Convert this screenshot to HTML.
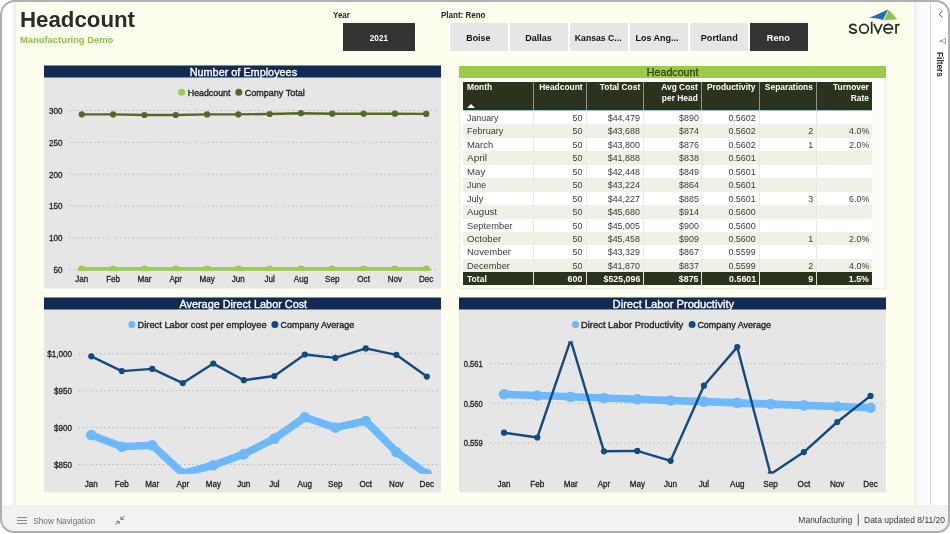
<!DOCTYPE html>
<html lang="en"><head><meta charset="utf-8"><title>Headcount - Manufacturing Demo</title>
<style>
html,body{margin:0;padding:0;}
body{width:950px;height:534px;overflow:hidden;background:#fff;font-family:"Liberation Sans", sans-serif;position:relative;}
.abs{position:absolute;}
#page{left:0;top:0;width:950px;height:534px;overflow:hidden;background:#fff;will-change:transform;}
#frame{left:0;top:0;width:950px;height:533.3px;box-sizing:border-box;border:2.1px solid #aeb0b6;border-radius:15px 14px 12px 14px;box-shadow:0 0 0 20px #fff;pointer-events:none;}
#canvas{left:16px;top:2px;width:898px;height:503px;background:#fdfeee;}
#lshadow{left:2px;top:2px;width:14px;height:503px;background:linear-gradient(90deg,#fff 0%,#fff 62%,#e9e9ea 100%);}
#fgap{background:linear-gradient(90deg,#e9e9e6 0%,#f6f6f4 18%,#fcfcfb 55%,#fdfdfd 100%);}
#fpane{background:#fff;border-left:1px solid #d8d8d8;box-sizing:border-box;}
#footer{background:#f2f2f0;}
#title{left:19.8px;top:5.9px;transform:scaleX(1.012);transform-origin:left;font-size:22px;font-weight:700;color:#2b2b2b;line-height:28px;white-space:nowrap;}
#sub{left:20px;top:34.1px;font-size:9.4px;font-weight:700;color:#8cc047;line-height:12px;white-space:nowrap;}
.lbl{font-size:8.4px;font-weight:700;color:#252423;line-height:10px;white-space:nowrap;}
.lbl span{display:inline-block;transform:scaleX(0.955);transform-origin:left;}
.btn{background:#e6e6e6;color:#111;font-size:9.8px;font-weight:700;text-align:center;line-height:30px;white-space:nowrap;}
.btn span{display:inline-block;transform:scaleX(0.88);}
.btn.sel{background:#333;color:#fff;}
#tpanel{background:#fcfdf6;box-sizing:border-box;border:1px solid #eceee2;}
#ttitle{position:absolute;left:-1px;top:-1px;width:427px;height:12.3px;background:#9acb4b;text-align:center;font-size:11px;line-height:13.4px;color:#34420f;-webkit-text-stroke:0.3px #34420f;}
#ttitle span{display:inline-block;transform:scaleX(0.968);}
#tbl{border-collapse:collapse;table-layout:fixed;width:409.1px;font-size:9.4px;color:#3a3a3a;}
#tbl th{background:#2b331c;color:#fff;height:28.8px;padding:0;vertical-align:top;font-size:9.6px;font-weight:700;line-height:10.6px;border-right:1px solid #8b989a;border-bottom:1px solid #9cc3dc;box-sizing:border-box;position:relative;}
#tbl th:last-child{border-right:none;}
#tbl th span{position:absolute;top:0.8px;display:block;white-space:nowrap;transform:scaleX(0.875);}
#tbl th.l span{left:3.6px;text-align:left;transform-origin:left top;}
#tbl th.r span{right:3.4px;text-align:right;transform-origin:right top;}
.sort{position:absolute;left:3.4px;top:22.2px;width:0;height:0;border-left:4.1px solid transparent;border-right:4.1px solid transparent;border-bottom:4.2px solid #fff;}
#tbl td{height:13.47px;padding:0;line-height:13.47px;border-right:1px solid #e9ebe2;box-sizing:border-box;white-space:nowrap;overflow:visible;}
#tbl td:last-child{border-right:none;}
#tbl td span{display:inline-block;transform:scaleX(0.95);}
#tbl td.l span{transform:scaleX(0.93);}
#tbl td.l{text-align:left;padding-left:3.6px;} #tbl td.l span{transform-origin:left center;}
#tbl td.r{text-align:right;padding-right:3.1px;} #tbl td.r span{transform-origin:right center;}
#tbl tbody tr{background:#fff;}
#tbl tbody tr.alt{background:#eef1e5;}
#tbl tbody tr.tot{background:#2b331c;color:#fff;font-weight:700;}
#tbl tbody tr.tot td{height:12.3px;line-height:12.3px;border-right:1px solid #dfe3d8;font-size:9.2px;}
#tbl tbody tr.tot td span{transform:scaleX(0.96);position:relative;top:0.7px;}
#tbl tbody tr.tot td.l span{transform:scaleX(0.93);}
#tbl tbody tr.tot td:last-child{border-right:none;}
</style></head>
<body>
<div class="abs" id="page">
<div class="abs" id="lshadow"></div>
<div class="abs" id="canvas"></div>
<div class="abs" id="title">Headcount</div>
<div class="abs" id="sub">Manufacturing Demo</div>
<div class="abs lbl" style="left:333.4px;top:9.5px"><span>Year</span></div><div class="abs btn sel" style="left:342.6px;top:23.2px;width:72.8px;height:28.3px"><span style="transform:scaleX(0.835)">2021</span></div><div class="abs lbl" style="left:440.6px;top:9.5px"><span>Plant: Reno</span></div><div class="abs btn" style="left:449.6px;top:23.2px;width:58.2px;height:28.3px"><span style="transform:translateX(0px) scaleX(0.9)">Boise</span></div><div class="abs btn" style="left:509.6px;top:23.2px;width:58.2px;height:28.3px"><span style="transform:translateX(0px) scaleX(0.922)">Dallas</span></div><div class="abs btn" style="left:569.6px;top:23.2px;width:58.2px;height:28.3px"><span style="transform:translateX(-0.2px) scaleX(0.885)">Kansas C...</span></div><div class="abs btn" style="left:629.6px;top:23.2px;width:58.2px;height:28.3px"><span style="transform:translateX(-1.5px) scaleX(0.915)">Los Ang...</span></div><div class="abs btn" style="left:689.6px;top:23.2px;width:58.2px;height:28.3px"><span style="transform:translateX(0.4px) scaleX(0.93)">Portland</span></div><div class="abs btn sel" style="left:749.6px;top:23.2px;width:58.2px;height:28.3px"><span style="transform:translateX(0px) scaleX(0.94)">Reno</span></div>
<svg class="abs" style="left:840px;top:4px" width="70" height="38" viewBox="840 4 70 38">
<path d="M869.1 18.1 L888.2 9.6 L883.0 19.9 Q876.5 17.6 869.1 18.1 Z" fill="#1f6db5"/>
<path d="M888.9 9.7 L897.2 19.6 L884.0 19.9 Z" fill="#8cc540"/>
<g fill="none" stroke="#2b2b29" stroke-width="1.7">
<path d="M856.1 26.3 C855.6 25.0 854.4 24.45 853.0 24.45 C851.1 24.45 849.9 25.5 849.9 26.8 C849.9 28.2 851.0 28.6 852.9 29.1 C855.2 29.7 856.4 30.1 856.4 31.0 C856.4 32.3 855.0 33.05 853.0 33.05 C851.2 33.05 849.9 32.3 849.4 30.9"/>
<circle cx="864" cy="28.75" r="4.35"/>
<path d="M871.7 21.7 L871.7 33.8"/>
<path d="M874.0 23.9 L878.0 32.9 L882.0 23.9" stroke-linejoin="miter"/>
<path d="M884.0 28.9 L892.6 28.9 A4.35 4.35 0 1 0 891.5 31.7"/>
<path d="M896.05 23.9 L896.05 33.8 M896.05 27.4 C896.05 25.3 897.5 24.3 899.7 24.6"/>
</g>
</svg>
<svg class="abs" style="left:44px;top:65px" width="397" height="224" viewBox="44 65 397 224" font-family='"Liberation Sans", sans-serif'><rect x="44" y="65.5" width="397" height="223" fill="#e6e6e6"/><rect x="44" y="65.5" width="397" height="12" fill="#132b52"/><text x="189.70" y="75.80" font-size="11" fill="#fff" font-weight="400" stroke="#fff" stroke-width="0.35" textLength="107.4" lengthAdjust="spacingAndGlyphs">Number of Employees</text><defs><clipPath id="cp1"><rect x="44" y="78" width="397" height="192.8"/></clipPath></defs><line x1="69.5" x2="437.5" y1="110.50" y2="110.50" stroke="#a8a8a8" stroke-width="1" stroke-dasharray="1 3.2"/><text transform="translate(62.50,113.70) scale(0.93,1)" font-size="8.7" stroke="#222221" stroke-width="0.3" text-anchor="end" fill="#222221" font-weight="400" >300</text><line x1="69.5" x2="437.5" y1="142.40" y2="142.40" stroke="#a8a8a8" stroke-width="1" stroke-dasharray="1 3.2"/><text transform="translate(62.50,145.60) scale(0.93,1)" font-size="8.7" stroke="#222221" stroke-width="0.3" text-anchor="end" fill="#222221" font-weight="400" >250</text><line x1="69.5" x2="437.5" y1="174.30" y2="174.30" stroke="#a8a8a8" stroke-width="1" stroke-dasharray="1 3.2"/><text transform="translate(62.50,177.50) scale(0.93,1)" font-size="8.7" stroke="#222221" stroke-width="0.3" text-anchor="end" fill="#222221" font-weight="400" >200</text><line x1="69.5" x2="437.5" y1="206.20" y2="206.20" stroke="#a8a8a8" stroke-width="1" stroke-dasharray="1 3.2"/><text transform="translate(62.50,209.40) scale(0.93,1)" font-size="8.7" stroke="#222221" stroke-width="0.3" text-anchor="end" fill="#222221" font-weight="400" >150</text><line x1="69.5" x2="437.5" y1="238.00" y2="238.00" stroke="#a8a8a8" stroke-width="1" stroke-dasharray="1 3.2"/><text transform="translate(62.50,241.20) scale(0.93,1)" font-size="8.7" stroke="#222221" stroke-width="0.3" text-anchor="end" fill="#222221" font-weight="400" >100</text><line x1="69.5" x2="437.5" y1="269.80" y2="269.80" stroke="#a8a8a8" stroke-width="1" stroke-dasharray="1 3.2"/><text transform="translate(62.50,273.00) scale(0.93,1)" font-size="8.7" stroke="#222221" stroke-width="0.3" text-anchor="end" fill="#222221" font-weight="400" >50</text><g clip-path="url(#cp1)"><polyline points="81.80,269.80 113.11,269.80 144.42,269.80 175.73,269.80 207.04,269.80 238.35,269.80 269.66,269.80 300.97,269.80 332.28,269.80 363.59,269.80 394.90,269.80 426.21,269.80" fill="none" stroke="#9ccc50" stroke-width="5.4" stroke-linejoin="round" stroke-linecap="round"/><circle cx="81.80" cy="269.80" r="4.3" fill="#9ccc50"/><circle cx="113.11" cy="269.80" r="4.3" fill="#9ccc50"/><circle cx="144.42" cy="269.80" r="4.3" fill="#9ccc50"/><circle cx="175.73" cy="269.80" r="4.3" fill="#9ccc50"/><circle cx="207.04" cy="269.80" r="4.3" fill="#9ccc50"/><circle cx="238.35" cy="269.80" r="4.3" fill="#9ccc50"/><circle cx="269.66" cy="269.80" r="4.3" fill="#9ccc50"/><circle cx="300.97" cy="269.80" r="4.3" fill="#9ccc50"/><circle cx="332.28" cy="269.80" r="4.3" fill="#9ccc50"/><circle cx="363.59" cy="269.80" r="4.3" fill="#9ccc50"/><circle cx="394.90" cy="269.80" r="4.3" fill="#9ccc50"/><circle cx="426.21" cy="269.80" r="4.3" fill="#9ccc50"/></g><g><polyline points="81.80,114.40 113.11,114.40 144.42,115.00 175.73,115.00 207.04,114.40 238.35,114.40 269.66,114.00 300.97,113.20 332.28,113.70 363.59,113.70 394.90,113.70 426.21,113.90" fill="none" stroke="#526a26" stroke-width="2.4" stroke-linejoin="round" stroke-linecap="round"/><circle cx="81.80" cy="114.40" r="3.1" fill="#526a26"/><circle cx="113.11" cy="114.40" r="3.1" fill="#526a26"/><circle cx="144.42" cy="115.00" r="3.1" fill="#526a26"/><circle cx="175.73" cy="115.00" r="3.1" fill="#526a26"/><circle cx="207.04" cy="114.40" r="3.1" fill="#526a26"/><circle cx="238.35" cy="114.40" r="3.1" fill="#526a26"/><circle cx="269.66" cy="114.00" r="3.1" fill="#526a26"/><circle cx="300.97" cy="113.20" r="3.1" fill="#526a26"/><circle cx="332.28" cy="113.70" r="3.1" fill="#526a26"/><circle cx="363.59" cy="113.70" r="3.1" fill="#526a26"/><circle cx="394.90" cy="113.70" r="3.1" fill="#526a26"/><circle cx="426.21" cy="113.90" r="3.1" fill="#526a26"/></g><text transform="translate(81.80,282.30) scale(0.93,1)" font-size="8.7" stroke="#222221" stroke-width="0.3" text-anchor="middle" fill="#222221" font-weight="400" >Jan</text><text transform="translate(113.11,282.30) scale(0.93,1)" font-size="8.7" stroke="#222221" stroke-width="0.3" text-anchor="middle" fill="#222221" font-weight="400" >Feb</text><text transform="translate(144.42,282.30) scale(0.93,1)" font-size="8.7" stroke="#222221" stroke-width="0.3" text-anchor="middle" fill="#222221" font-weight="400" >Mar</text><text transform="translate(175.73,282.30) scale(0.93,1)" font-size="8.7" stroke="#222221" stroke-width="0.3" text-anchor="middle" fill="#222221" font-weight="400" >Apr</text><text transform="translate(207.04,282.30) scale(0.93,1)" font-size="8.7" stroke="#222221" stroke-width="0.3" text-anchor="middle" fill="#222221" font-weight="400" >May</text><text transform="translate(238.35,282.30) scale(0.93,1)" font-size="8.7" stroke="#222221" stroke-width="0.3" text-anchor="middle" fill="#222221" font-weight="400" >Jun</text><text transform="translate(269.66,282.30) scale(0.93,1)" font-size="8.7" stroke="#222221" stroke-width="0.3" text-anchor="middle" fill="#222221" font-weight="400" >Jul</text><text transform="translate(300.97,282.30) scale(0.93,1)" font-size="8.7" stroke="#222221" stroke-width="0.3" text-anchor="middle" fill="#222221" font-weight="400" >Aug</text><text transform="translate(332.28,282.30) scale(0.93,1)" font-size="8.7" stroke="#222221" stroke-width="0.3" text-anchor="middle" fill="#222221" font-weight="400" >Sep</text><text transform="translate(363.59,282.30) scale(0.93,1)" font-size="8.7" stroke="#222221" stroke-width="0.3" text-anchor="middle" fill="#222221" font-weight="400" >Oct</text><text transform="translate(394.90,282.30) scale(0.93,1)" font-size="8.7" stroke="#222221" stroke-width="0.3" text-anchor="middle" fill="#222221" font-weight="400" >Nov</text><text transform="translate(426.21,282.30) scale(0.93,1)" font-size="8.7" stroke="#222221" stroke-width="0.3" text-anchor="middle" fill="#222221" font-weight="400" >Dec</text><circle cx="181.6" cy="92.3" r="3.5" fill="#9ccc50"/><text x="187.80" y="95.60" font-size="9.5" fill="#222221" font-weight="400" stroke="#222221" stroke-width="0.35" textLength="42.6" lengthAdjust="spacingAndGlyphs">Headcount</text><circle cx="238.8" cy="92.3" r="3.5" fill="#526a26"/><text x="244.70" y="95.60" font-size="9.5" fill="#222221" font-weight="400" stroke="#222221" stroke-width="0.35" textLength="60.1" lengthAdjust="spacingAndGlyphs">Company Total</text></svg>
<div class="abs" id="tpanel" style="left:459px;top:65.5px;width:427px;height:223px"><div id="ttitle"><span>Headcount</span></div></div><table class="abs" id="tbl" style="left:463.3px;top:81.5px"><colgroup><col style="width:70.2px"><col style="width:52.8px"><col style="width:57.4px"><col style="width:58.3px"><col style="width:57.6px"><col style="width:56.9px"><col style="width:55.9px"></colgroup><thead><tr><th class="l"><span>Month</span><i class="sort"></i></th><th class="r"><span>Headcount</span></th><th class="r"><span>Total Cost</span></th><th class="r"><span>Avg Cost<br>per Head</span></th><th class="r"><span>Productivity</span></th><th class="r"><span>Separations</span></th><th class="r"><span>Turnover<br>Rate</span></th></tr></thead><tbody><tr class=""><td class="l"><span style="transform:scaleX(0.944)">January</span></td><td class="r"><span>50</span></td><td class="r"><span>$44,479</span></td><td class="r"><span>$890</span></td><td class="r"><span>0.5602</span></td><td class="r"><span></span></td><td class="r"><span></span></td></tr><tr class="alt"><td class="l"><span style="transform:scaleX(0.967)">February</span></td><td class="r"><span>50</span></td><td class="r"><span>$43,688</span></td><td class="r"><span>$874</span></td><td class="r"><span>0.5602</span></td><td class="r"><span>2</span></td><td class="r"><span>4.0%</span></td></tr><tr class=""><td class="l"><span style="transform:scaleX(1.006)">March</span></td><td class="r"><span>50</span></td><td class="r"><span>$43,800</span></td><td class="r"><span>$876</span></td><td class="r"><span>0.5602</span></td><td class="r"><span>1</span></td><td class="r"><span>2.0%</span></td></tr><tr class="alt"><td class="l"><span style="transform:scaleX(1.07)">April</span></td><td class="r"><span>50</span></td><td class="r"><span>$41,888</span></td><td class="r"><span>$838</span></td><td class="r"><span>0.5601</span></td><td class="r"><span></span></td><td class="r"><span></span></td></tr><tr class=""><td class="l"><span style="transform:scaleX(1.027)">May</span></td><td class="r"><span>50</span></td><td class="r"><span>$42,448</span></td><td class="r"><span>$849</span></td><td class="r"><span>0.5601</span></td><td class="r"><span></span></td><td class="r"><span></span></td></tr><tr class="alt"><td class="l"><span style="transform:scaleX(0.939)">June</span></td><td class="r"><span>50</span></td><td class="r"><span>$43,224</span></td><td class="r"><span>$864</span></td><td class="r"><span>0.5601</span></td><td class="r"><span></span></td><td class="r"><span></span></td></tr><tr class=""><td class="l"><span style="transform:scaleX(0.972)">July</span></td><td class="r"><span>50</span></td><td class="r"><span>$44,227</span></td><td class="r"><span>$885</span></td><td class="r"><span>0.5601</span></td><td class="r"><span>3</span></td><td class="r"><span>6.0%</span></td></tr><tr class="alt"><td class="l"><span style="transform:scaleX(1.028)">August</span></td><td class="r"><span>50</span></td><td class="r"><span>$45,680</span></td><td class="r"><span>$914</span></td><td class="r"><span>0.5600</span></td><td class="r"><span></span></td><td class="r"><span></span></td></tr><tr class=""><td class="l"><span style="transform:scaleX(0.99)">September</span></td><td class="r"><span>50</span></td><td class="r"><span>$45,005</span></td><td class="r"><span>$900</span></td><td class="r"><span>0.5600</span></td><td class="r"><span></span></td><td class="r"><span></span></td></tr><tr class="alt"><td class="l"><span style="transform:scaleX(1.025)">October</span></td><td class="r"><span>50</span></td><td class="r"><span>$45,458</span></td><td class="r"><span>$909</span></td><td class="r"><span>0.5600</span></td><td class="r"><span>1</span></td><td class="r"><span>2.0%</span></td></tr><tr class=""><td class="l"><span style="transform:scaleX(1.015)">November</span></td><td class="r"><span>50</span></td><td class="r"><span>$43,329</span></td><td class="r"><span>$867</span></td><td class="r"><span>0.5599</span></td><td class="r"><span></span></td><td class="r"><span></span></td></tr><tr class="alt"><td class="l"><span style="transform:scaleX(0.992)">December</span></td><td class="r"><span>50</span></td><td class="r"><span>$41,870</span></td><td class="r"><span>$837</span></td><td class="r"><span>0.5599</span></td><td class="r"><span>2</span></td><td class="r"><span>4.0%</span></td></tr><tr class="tot"><td class="l"><span>Total</span></td><td class="r"><span>600</span></td><td class="r"><span>$525,096</span></td><td class="r"><span>$875</span></td><td class="r"><span>0.5601</span></td><td class="r"><span>9</span></td><td class="r"><span>1.5%</span></td></tr></tbody></table>
<svg class="abs" style="left:44px;top:297px" width="397" height="196" viewBox="44 297 397 196" font-family='"Liberation Sans", sans-serif'><rect x="44" y="297.5" width="397" height="195" fill="#e6e6e6"/><rect x="44" y="297.5" width="397" height="12" fill="#132b52"/><text x="179.50" y="307.80" font-size="11" fill="#fff" font-weight="400" stroke="#fff" stroke-width="0.35" textLength="127.6" lengthAdjust="spacingAndGlyphs">Average Direct Labor Cost</text><defs><clipPath id="cp2"><rect x="44" y="310" width="397" height="163.7"/></clipPath></defs><line x1="79" x2="438.5" y1="353.70" y2="353.70" stroke="#a8a8a8" stroke-width="1" stroke-dasharray="1 3.2"/><text transform="translate(72.00,356.90) scale(0.93,1)" font-size="8.7" stroke="#222221" stroke-width="0.3" text-anchor="end" fill="#222221" font-weight="400" >$1,000</text><line x1="79" x2="438.5" y1="390.60" y2="390.60" stroke="#a8a8a8" stroke-width="1" stroke-dasharray="1 3.2"/><text transform="translate(72.00,393.80) scale(0.93,1)" font-size="8.7" stroke="#222221" stroke-width="0.3" text-anchor="end" fill="#222221" font-weight="400" >$950</text><line x1="79" x2="438.5" y1="427.60" y2="427.60" stroke="#a8a8a8" stroke-width="1" stroke-dasharray="1 3.2"/><text transform="translate(72.00,430.80) scale(0.93,1)" font-size="8.7" stroke="#222221" stroke-width="0.3" text-anchor="end" fill="#222221" font-weight="400" >$900</text><line x1="79" x2="438.5" y1="464.50" y2="464.50" stroke="#a8a8a8" stroke-width="1" stroke-dasharray="1 3.2"/><text transform="translate(72.00,467.70) scale(0.93,1)" font-size="8.7" stroke="#222221" stroke-width="0.3" text-anchor="end" fill="#222221" font-weight="400" >$850</text><g clip-path="url(#cp2)"><polyline points="91.30,434.98 121.80,446.79 152.30,445.31 182.80,473.36 213.30,465.24 243.80,454.17 274.30,438.67 304.80,417.27 335.30,427.60 365.80,420.96 396.30,451.95 426.80,474.09" fill="none" stroke="#6db8fc" stroke-width="7.6" stroke-linejoin="round" stroke-linecap="round"/><circle cx="91.30" cy="434.98" r="5.3" fill="#6db8fc"/><circle cx="121.80" cy="446.79" r="5.3" fill="#6db8fc"/><circle cx="152.30" cy="445.31" r="5.3" fill="#6db8fc"/><circle cx="182.80" cy="473.36" r="5.3" fill="#6db8fc"/><circle cx="213.30" cy="465.24" r="5.3" fill="#6db8fc"/><circle cx="243.80" cy="454.17" r="5.3" fill="#6db8fc"/><circle cx="274.30" cy="438.67" r="5.3" fill="#6db8fc"/><circle cx="304.80" cy="417.27" r="5.3" fill="#6db8fc"/><circle cx="335.30" cy="427.60" r="5.3" fill="#6db8fc"/><circle cx="365.80" cy="420.96" r="5.3" fill="#6db8fc"/><circle cx="396.30" cy="451.95" r="5.3" fill="#6db8fc"/><circle cx="426.80" cy="474.09" r="5.3" fill="#6db8fc"/></g><g clip-path="url(#cp2)"><polyline points="91.30,356.30 121.80,371.10 152.30,368.90 182.80,383.10 213.30,363.60 243.80,380.20 274.30,376.00 304.80,354.50 335.30,357.90 365.80,348.40 396.30,354.80 426.80,376.60" fill="none" stroke="#134a80" stroke-width="2.4" stroke-linejoin="round" stroke-linecap="round"/><circle cx="91.30" cy="356.30" r="3.1" fill="#134a80"/><circle cx="121.80" cy="371.10" r="3.1" fill="#134a80"/><circle cx="152.30" cy="368.90" r="3.1" fill="#134a80"/><circle cx="182.80" cy="383.10" r="3.1" fill="#134a80"/><circle cx="213.30" cy="363.60" r="3.1" fill="#134a80"/><circle cx="243.80" cy="380.20" r="3.1" fill="#134a80"/><circle cx="274.30" cy="376.00" r="3.1" fill="#134a80"/><circle cx="304.80" cy="354.50" r="3.1" fill="#134a80"/><circle cx="335.30" cy="357.90" r="3.1" fill="#134a80"/><circle cx="365.80" cy="348.40" r="3.1" fill="#134a80"/><circle cx="396.30" cy="354.80" r="3.1" fill="#134a80"/><circle cx="426.80" cy="376.60" r="3.1" fill="#134a80"/></g><text transform="translate(91.30,486.60) scale(0.93,1)" font-size="8.7" stroke="#222221" stroke-width="0.3" text-anchor="middle" fill="#222221" font-weight="400" >Jan</text><text transform="translate(121.80,486.60) scale(0.93,1)" font-size="8.7" stroke="#222221" stroke-width="0.3" text-anchor="middle" fill="#222221" font-weight="400" >Feb</text><text transform="translate(152.30,486.60) scale(0.93,1)" font-size="8.7" stroke="#222221" stroke-width="0.3" text-anchor="middle" fill="#222221" font-weight="400" >Mar</text><text transform="translate(182.80,486.60) scale(0.93,1)" font-size="8.7" stroke="#222221" stroke-width="0.3" text-anchor="middle" fill="#222221" font-weight="400" >Apr</text><text transform="translate(213.30,486.60) scale(0.93,1)" font-size="8.7" stroke="#222221" stroke-width="0.3" text-anchor="middle" fill="#222221" font-weight="400" >May</text><text transform="translate(243.80,486.60) scale(0.93,1)" font-size="8.7" stroke="#222221" stroke-width="0.3" text-anchor="middle" fill="#222221" font-weight="400" >Jun</text><text transform="translate(274.30,486.60) scale(0.93,1)" font-size="8.7" stroke="#222221" stroke-width="0.3" text-anchor="middle" fill="#222221" font-weight="400" >Jul</text><text transform="translate(304.80,486.60) scale(0.93,1)" font-size="8.7" stroke="#222221" stroke-width="0.3" text-anchor="middle" fill="#222221" font-weight="400" >Aug</text><text transform="translate(335.30,486.60) scale(0.93,1)" font-size="8.7" stroke="#222221" stroke-width="0.3" text-anchor="middle" fill="#222221" font-weight="400" >Sep</text><text transform="translate(365.80,486.60) scale(0.93,1)" font-size="8.7" stroke="#222221" stroke-width="0.3" text-anchor="middle" fill="#222221" font-weight="400" >Oct</text><text transform="translate(396.30,486.60) scale(0.93,1)" font-size="8.7" stroke="#222221" stroke-width="0.3" text-anchor="middle" fill="#222221" font-weight="400" >Nov</text><text transform="translate(426.80,486.60) scale(0.93,1)" font-size="8.7" stroke="#222221" stroke-width="0.3" text-anchor="middle" fill="#222221" font-weight="400" >Dec</text><circle cx="131.8" cy="324.4" r="3.5" fill="#6db8fc"/><text x="137.60" y="327.70" font-size="9.5" fill="#222221" font-weight="400" stroke="#222221" stroke-width="0.35" textLength="129.0" lengthAdjust="spacingAndGlyphs">Direct Labor cost per employee</text><circle cx="274.9" cy="324.4" r="3.5" fill="#134a80"/><text x="280.50" y="327.70" font-size="9.5" fill="#222221" font-weight="400" stroke="#222221" stroke-width="0.35" textLength="73.7" lengthAdjust="spacingAndGlyphs">Company Average</text></svg>
<svg class="abs" style="left:459px;top:297px" width="427" height="196" viewBox="459 297 427 196" font-family='"Liberation Sans", sans-serif'><rect x="459" y="297.5" width="427" height="195" fill="#e6e6e6"/><rect x="459" y="297.5" width="427" height="12" fill="#132b52"/><text x="612.60" y="307.80" font-size="11" fill="#fff" font-weight="400" stroke="#fff" stroke-width="0.35" textLength="121.6" lengthAdjust="spacingAndGlyphs">Direct Labor Productivity</text><defs><clipPath id="cp4"><rect x="459" y="341.4" width="427" height="132.2"/></clipPath></defs><line x1="490" x2="883" y1="363.80" y2="363.80" stroke="#a8a8a8" stroke-width="1" stroke-dasharray="1 3.2"/><text transform="translate(482.70,367.00) scale(0.875,1)" font-size="8.7" stroke="#222221" stroke-width="0.3" text-anchor="end" fill="#222221" font-weight="400" >0.561</text><line x1="490" x2="883" y1="403.30" y2="403.30" stroke="#a8a8a8" stroke-width="1" stroke-dasharray="1 3.2"/><text transform="translate(482.70,406.50) scale(0.875,1)" font-size="8.7" stroke="#222221" stroke-width="0.3" text-anchor="end" fill="#222221" font-weight="400" >0.560</text><line x1="490" x2="883" y1="443.00" y2="443.00" stroke="#a8a8a8" stroke-width="1" stroke-dasharray="1 3.2"/><text transform="translate(482.70,446.20) scale(0.875,1)" font-size="8.7" stroke="#222221" stroke-width="0.3" text-anchor="end" fill="#222221" font-weight="400" >0.559</text><g clip-path="url(#cp4)"><polyline points="504.00,394.30 537.32,395.53 570.64,396.75 603.96,397.98 637.28,399.21 670.60,400.44 703.92,401.66 737.24,402.89 770.56,404.12 803.88,405.35 837.20,406.57 870.52,407.80" fill="none" stroke="#6db8fc" stroke-width="7.6" stroke-linejoin="round" stroke-linecap="round"/><circle cx="504.00" cy="394.30" r="5.3" fill="#6db8fc"/><circle cx="537.32" cy="395.53" r="5.3" fill="#6db8fc"/><circle cx="570.64" cy="396.75" r="5.3" fill="#6db8fc"/><circle cx="603.96" cy="397.98" r="5.3" fill="#6db8fc"/><circle cx="637.28" cy="399.21" r="5.3" fill="#6db8fc"/><circle cx="670.60" cy="400.44" r="5.3" fill="#6db8fc"/><circle cx="703.92" cy="401.66" r="5.3" fill="#6db8fc"/><circle cx="737.24" cy="402.89" r="5.3" fill="#6db8fc"/><circle cx="770.56" cy="404.12" r="5.3" fill="#6db8fc"/><circle cx="803.88" cy="405.35" r="5.3" fill="#6db8fc"/><circle cx="837.20" cy="406.57" r="5.3" fill="#6db8fc"/><circle cx="870.52" cy="407.80" r="5.3" fill="#6db8fc"/></g><g clip-path="url(#cp4)"><polyline points="504.00,432.70 537.32,437.50 570.64,340.00 603.96,451.30 637.28,450.90 670.60,460.80 703.92,385.70 737.24,347.10 770.56,474.20 803.88,452.10 837.20,422.00 870.52,395.90" fill="none" stroke="#134a80" stroke-width="2.4" stroke-linejoin="round" stroke-linecap="round"/><circle cx="504.00" cy="432.70" r="3.1" fill="#134a80"/><circle cx="537.32" cy="437.50" r="3.1" fill="#134a80"/><circle cx="570.64" cy="340.00" r="3.1" fill="#134a80"/><circle cx="603.96" cy="451.30" r="3.1" fill="#134a80"/><circle cx="637.28" cy="450.90" r="3.1" fill="#134a80"/><circle cx="670.60" cy="460.80" r="3.1" fill="#134a80"/><circle cx="703.92" cy="385.70" r="3.1" fill="#134a80"/><circle cx="737.24" cy="347.10" r="3.1" fill="#134a80"/><circle cx="770.56" cy="474.20" r="3.1" fill="#134a80"/><circle cx="803.88" cy="452.10" r="3.1" fill="#134a80"/><circle cx="837.20" cy="422.00" r="3.1" fill="#134a80"/><circle cx="870.52" cy="395.90" r="3.1" fill="#134a80"/></g><text transform="translate(504.00,487.00) scale(0.93,1)" font-size="8.7" stroke="#222221" stroke-width="0.3" text-anchor="middle" fill="#222221" font-weight="400" >Jan</text><text transform="translate(537.32,487.00) scale(0.93,1)" font-size="8.7" stroke="#222221" stroke-width="0.3" text-anchor="middle" fill="#222221" font-weight="400" >Feb</text><text transform="translate(570.64,487.00) scale(0.93,1)" font-size="8.7" stroke="#222221" stroke-width="0.3" text-anchor="middle" fill="#222221" font-weight="400" >Mar</text><text transform="translate(603.96,487.00) scale(0.93,1)" font-size="8.7" stroke="#222221" stroke-width="0.3" text-anchor="middle" fill="#222221" font-weight="400" >Apr</text><text transform="translate(637.28,487.00) scale(0.93,1)" font-size="8.7" stroke="#222221" stroke-width="0.3" text-anchor="middle" fill="#222221" font-weight="400" >May</text><text transform="translate(670.60,487.00) scale(0.93,1)" font-size="8.7" stroke="#222221" stroke-width="0.3" text-anchor="middle" fill="#222221" font-weight="400" >Jun</text><text transform="translate(703.92,487.00) scale(0.93,1)" font-size="8.7" stroke="#222221" stroke-width="0.3" text-anchor="middle" fill="#222221" font-weight="400" >Jul</text><text transform="translate(737.24,487.00) scale(0.93,1)" font-size="8.7" stroke="#222221" stroke-width="0.3" text-anchor="middle" fill="#222221" font-weight="400" >Aug</text><text transform="translate(770.56,487.00) scale(0.93,1)" font-size="8.7" stroke="#222221" stroke-width="0.3" text-anchor="middle" fill="#222221" font-weight="400" >Sep</text><text transform="translate(803.88,487.00) scale(0.93,1)" font-size="8.7" stroke="#222221" stroke-width="0.3" text-anchor="middle" fill="#222221" font-weight="400" >Oct</text><text transform="translate(837.20,487.00) scale(0.93,1)" font-size="8.7" stroke="#222221" stroke-width="0.3" text-anchor="middle" fill="#222221" font-weight="400" >Nov</text><text transform="translate(870.52,487.00) scale(0.93,1)" font-size="8.7" stroke="#222221" stroke-width="0.3" text-anchor="middle" fill="#222221" font-weight="400" >Dec</text><circle cx="575.5" cy="324.4" r="3.5" fill="#6db8fc"/><text x="581.00" y="327.70" font-size="9.5" fill="#222221" font-weight="400" stroke="#222221" stroke-width="0.35" textLength="102.2" lengthAdjust="spacingAndGlyphs">Direct Labor Productivity</text><circle cx="692.1" cy="324.4" r="3.5" fill="#134a80"/><text x="697.40" y="327.70" font-size="9.5" fill="#222221" font-weight="400" stroke="#222221" stroke-width="0.35" textLength="73.6" lengthAdjust="spacingAndGlyphs">Company Average</text></svg>
<div class="abs" id="fgap" style="left:914px;top:2px;width:16px;height:503px"></div>
<div class="abs" id="fpane" style="left:930px;top:2px;width:18px;height:503px"></div>
<svg class="abs" style="left:931px;top:2px" width="17" height="90" viewBox="931 2 17 90" font-family='"Liberation Sans", sans-serif'>
<polyline points="942.6,10.8 939.2,14.2 942.6,17.6" fill="none" stroke="#555" stroke-width="1"/>
<path d="M939.6 38.2 L945.6 38.2 L943.2 41 L943.2 44 L942 43.2 L942 41 Z" fill="none" stroke="#888" stroke-width="0.8" transform="rotate(90 942.6 41)"/>
<text transform="translate(937.2,52) rotate(90)" font-size="9" font-weight="700" fill="#252423" textLength="25" lengthAdjust="spacingAndGlyphs">Filters</text>
</svg>
<div class="abs" id="footer" style="left:2px;top:505px;width:946px;height:26.5px"></div>
<svg class="abs" style="left:2px;top:505px" width="946" height="27" viewBox="2 505 946 27" font-family='"Liberation Sans", sans-serif'>
<g stroke="#8a8886" stroke-width="1"><line x1="17" x2="27" y1="517.5" y2="517.5"/><line x1="17" x2="27" y1="520.5" y2="520.5"/><line x1="17" x2="27" y1="523.5" y2="523.5"/></g>
<text x="33.2" y="523.8" font-size="8.5" fill="#6e6d6b" textLength="62" lengthAdjust="spacingAndGlyphs">Show Navigation</text>
<g stroke="#605e5c" stroke-width="0.9" fill="none"><path d="M124.5 515.8 L121 519.3 M121 516.6 L121 519.3 L123.7 519.3"/><path d="M115.5 524.8 L119 521.3 M119 524 L119 521.3 L116.3 521.3"/></g>
<text x="798.3" y="523.2" font-size="8.5" fill="#3b3a39" textLength="54" lengthAdjust="spacingAndGlyphs">Manufacturing</text>
<line x1="858.3" x2="858.3" y1="514" y2="525.5" stroke="#605e5c" stroke-width="1"/>
<text x="864" y="523.2" font-size="8.5" fill="#3b3a39" textLength="81" lengthAdjust="spacingAndGlyphs">Data updated 8/11/20</text>
</svg>
<div class="abs" id="frame"></div>
</div>
</body></html>
